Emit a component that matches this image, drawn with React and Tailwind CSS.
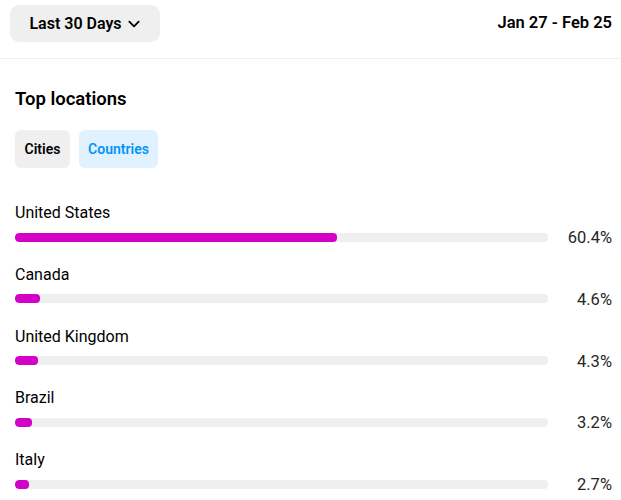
import React from 'react';

const rows = [
  { name: 'United States', pct: 60.4 },
  { name: 'Canada', pct: 4.6 },
  { name: 'United Kingdom', pct: 4.3 },
  { name: 'Brazil', pct: 3.2 },
  { name: 'Italy', pct: 2.7 },
];

export default function App() {
  return (
    <div className="w-[621px] h-[500px] bg-white text-[#000] overflow-hidden" style={{ fontFamily: 'Roboto, "Liberation Sans", sans-serif' }}>
      <div className="flex items-center justify-between pl-[10px] pr-[9px] pt-[5px] pb-[16px] border-b border-[#efefef]">
        <button className="h-[37px] w-[150px] rounded-[9px] bg-[#efefef] flex items-center justify-center gap-[5px] text-[16px] font-semibold">
          <span>Last 30 Days</span>
          <svg width="14" height="14" viewBox="0 0 24 24" fill="none" stroke="#000" strokeWidth="3.2" strokeLinecap="round" strokeLinejoin="round">
            <path d="M4 8l8 8 8-8" />
          </svg>
        </button>
        <span className="text-[16.5px] font-semibold">Jan 27 - Feb 25</span>
      </div>

      <div className="pl-[15px] pr-[9px] pt-[28px]">
        <h2 className="text-[18.5px] font-semibold leading-[24px]">Top locations</h2>
        <div className="flex gap-[9px] mt-[19px]">
          <button className="h-[38px] w-[55px] rounded-[6px] bg-[#efefef] text-[14px] font-semibold">Cities</button>
          <button className="h-[38px] w-[79px] rounded-[6px] bg-[#e0f1ff] text-[#0095f6] text-[14px] font-semibold">Countries</button>
        </div>

        <div className="mt-[34px] flex flex-col gap-[17.8px]">
          {rows.map((r) => (
            <div key={r.name}>
              <div className="text-[16px] leading-[22px]">{r.name}</div>
              <div className="flex items-center mt-[4px]">
                <div className="w-[533px] h-[9px] rounded-[4px] bg-[#efefef] overflow-hidden">
                  <div className="h-full rounded-[4px] bg-[#d300c5]" style={{ width: `${r.pct}%` }} />
                </div>
                <div className="flex-1 text-right text-[16.5px] leading-[18px] text-[#262626] translate-y-[1px]">{r.pct}%</div>
              </div>
            </div>
          ))}
        </div>
      </div>
    </div>
  );
}
